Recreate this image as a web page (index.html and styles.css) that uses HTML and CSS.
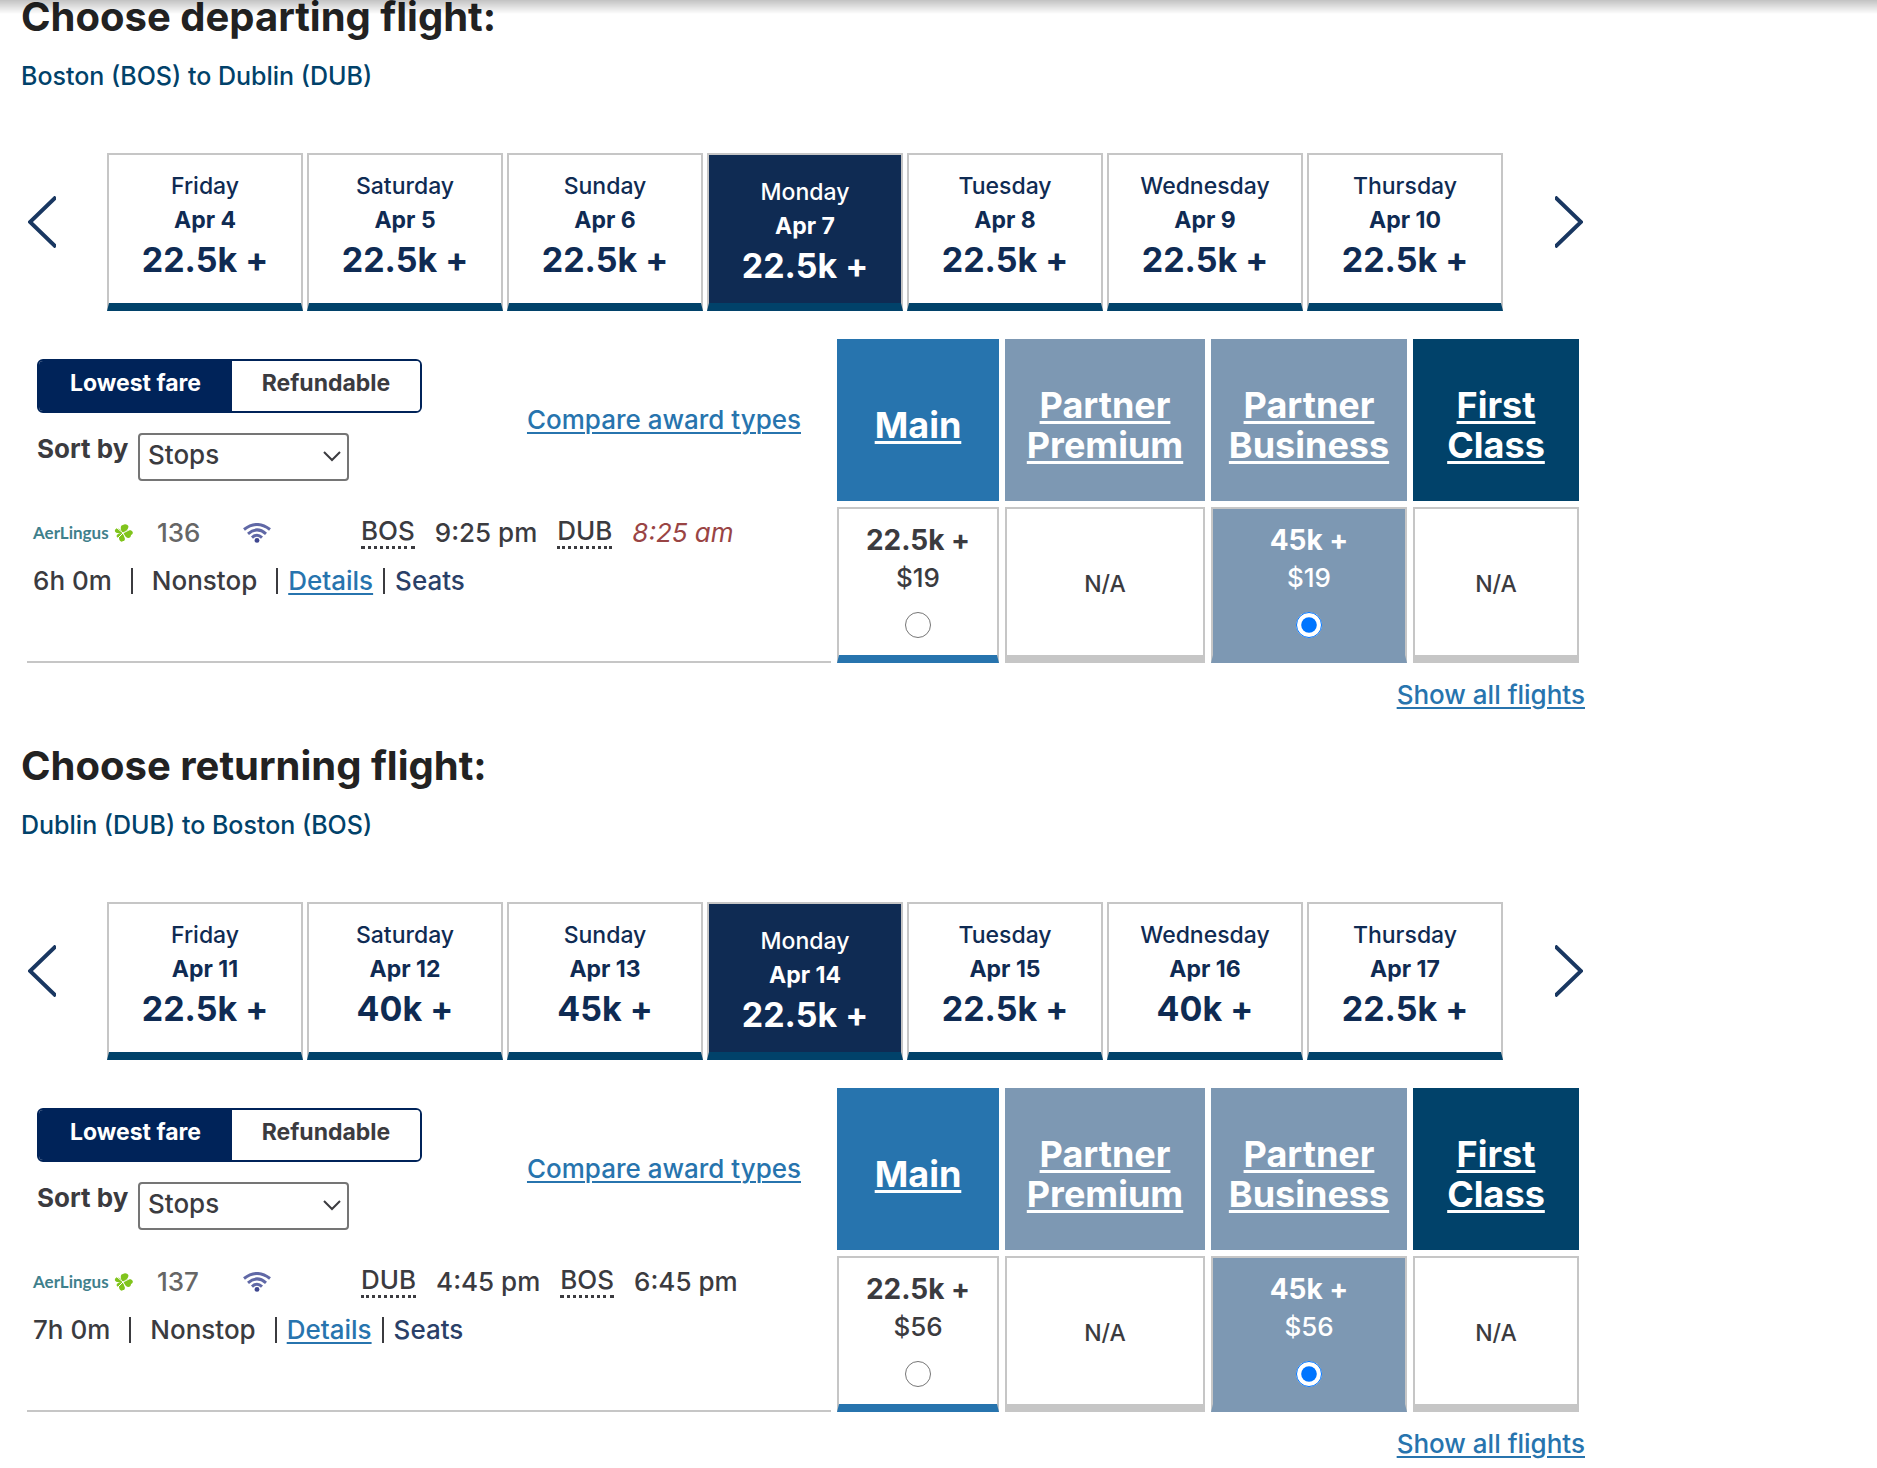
FILE: index.html
```html
<!DOCTYPE html>
<html lang="en">
<head>
<meta charset="utf-8">
<meta name="viewport" content="width=device-width, initial-scale=1">
<title>Choose flights</title>
<link rel="stylesheet" href="styles.css">
</head>
<body>
<svg class="sprite" aria-hidden="true">
  <symbol id="chevron-left" viewBox="0 0 28 52"><path d="M28 1 L2 26 L28 51" fill="none" stroke="#193761" stroke-width="4"/></symbol>
  <symbol id="chevron-right" viewBox="0 0 28 52"><path d="M0 1 L26 26 L0 51" fill="none" stroke="#193761" stroke-width="4"/></symbol>
  <symbol id="chevron-down" viewBox="0 0 18 12"><path d="M1 1 L9 9 L17 1" fill="none" stroke="#3b3b3f" stroke-width="2"/></symbol>
  <symbol id="wifi" viewBox="0 0 28 20">
    <g fill="none" stroke="#6068a6" stroke-width="3">
      <path d="M1 6.500 Q14 -3.500 27 6.500"/><path d="M5 10.800 Q14 3 23 10.800"/><path d="M9 14.600 Q14 10 19 14.600"/>
    </g>
    <circle cx="14" cy="17.400" r="2.400" fill="#3f4790"/>
  </symbol>
  <symbol id="shamrock" viewBox="0 0 19 18">
    <g fill="#80c41c">
      <path d="M9 9 C5 10 0 9 1 6 C2 4 4 4 5 5 C6 5 8 7 9 9Z"/>
      <path d="M9 9 C6 6 6 1 9 1 C11 -1 16 1 14 4 C14 6 11 7 9 9Z"/>
      <path d="M9 9 C11 6 16 5 18 7 C20 9 18 11 17 11 C17 14 14 15 12 13 C10 12 10 10 9 9Z"/>
      <path d="M9 9 C11 13 12 17 9 17 C7 19 5 16 5 14 C2 14 2 11 4 10 C6 9 7 9 9 9Z"/>
    </g>
    <path d="M9 9 L3 4 M9 9 L17 5 M9 9 L13 17 M9 9 L3 15" stroke="#fff" stroke-width="1" fill="none"/>
  </symbol>
</svg>
<div class="top-shadow"></div>
<main class="page">

  <section class="leg">
    <h2 class="leg-title">Choose departing flight:</h2>
    <p class="route">Boston (BOS) to Dublin (DUB)</p>
    <div class="calendar">
      <button class="arrow" type="button" aria-label="Previous dates"><svg><use href="#chevron-left"/></svg></button>
      <div class="days">
        <button class="day" type="button"><span>Friday</span><b>Apr 4</b><strong>22.5k +</strong></button>
        <button class="day" type="button"><span>Saturday</span><b>Apr 5</b><strong>22.5k +</strong></button>
        <button class="day" type="button"><span>Sunday</span><b>Apr 6</b><strong>22.5k +</strong></button>
        <button class="day selected" type="button" aria-pressed="true"><span>Monday</span><b>Apr 7</b><strong>22.5k +</strong></button>
        <button class="day" type="button"><span>Tuesday</span><b>Apr 8</b><strong>22.5k +</strong></button>
        <button class="day" type="button"><span>Wednesday</span><b>Apr 9</b><strong>22.5k +</strong></button>
        <button class="day" type="button"><span>Thursday</span><b>Apr 10</b><strong>22.5k +</strong></button>
      </div>
      <button class="arrow" type="button" aria-label="Next dates"><svg><use href="#chevron-right"/></svg></button>
    </div>
    <table class="fares">
      <colgroup><col><col class="col-main"><col class="col-premium"><col class="col-business"><col class="col-first"></colgroup>
      <thead>
        <tr>
          <td class="tools-cell">
            <div class="tools">
              <div class="filters">
                <div class="toggle">
                  <button class="toggle-option active" type="button">Lowest fare</button>
                  <button class="toggle-option" type="button">Refundable</button>
                </div>
                <div class="sort">
                  <label for="sort-out">Sort by</label>
                  <span class="select-box">
                    <select id="sort-out"><option>Stops</option><option>Price</option></select>
                    <svg><use href="#chevron-down"/></svg>
                  </span>
                </div>
              </div>
              <a class="link" href="#compare">Compare award types</a>
            </div>
          </td>
          <th class="main" scope="col"><a href="#main">Main</a></th>
          <th class="partner" scope="col"><a href="#premium">Partner Premium</a></th>
          <th class="partner" scope="col"><a href="#business">Partner Business</a></th>
          <th class="first" scope="col"><a href="#first">First<br>Class</a></th>
        </tr>
      </thead>
      <tbody>
        <tr>
          <td class="flight">
            <div class="flight-line">
              <span class="airline">AerLingus<svg><use href="#shamrock"/></svg></span>
              <span class="number">136</span>
              <svg class="wifi"><use href="#wifi"/></svg>
              <span class="times"><abbr title="Boston">BOS</abbr><span>9:25 pm</span><abbr title="Dublin">DUB</abbr><em>8:25 am</em></span>
            </div>
            <div class="flight-line info"><span>6h 0m</span><i></i><span>Nonstop</span><i class="tight"></i><a class="link" href="#details">Details</a><i class="tight"></i><a class="seats" href="#seats">Seats</a></div>
          </td>
          <td class="fare fare-main"><label><b>22.5k +</b><span>$19</span><input type="radio" name="out"></label></td>
          <td class="fare none">N/A</td>
          <td class="fare chosen"><label><b>45k +</b><span>$19</span><input type="radio" name="out" checked></label></td>
          <td class="fare none">N/A</td>
        </tr>
      </tbody>
    </table>
    <p class="show-all"><a class="link" href="#all">Show all flights</a></p>
  </section>

  <section class="leg">
    <h2 class="leg-title">Choose returning flight:</h2>
    <p class="route">Dublin (DUB) to Boston (BOS)</p>
    <div class="calendar">
      <button class="arrow" type="button" aria-label="Previous dates"><svg><use href="#chevron-left"/></svg></button>
      <div class="days">
        <button class="day" type="button"><span>Friday</span><b>Apr 11</b><strong>22.5k +</strong></button>
        <button class="day" type="button"><span>Saturday</span><b>Apr 12</b><strong>40k +</strong></button>
        <button class="day" type="button"><span>Sunday</span><b>Apr 13</b><strong>45k +</strong></button>
        <button class="day selected" type="button" aria-pressed="true"><span>Monday</span><b>Apr 14</b><strong>22.5k +</strong></button>
        <button class="day" type="button"><span>Tuesday</span><b>Apr 15</b><strong>22.5k +</strong></button>
        <button class="day" type="button"><span>Wednesday</span><b>Apr 16</b><strong>40k +</strong></button>
        <button class="day" type="button"><span>Thursday</span><b>Apr 17</b><strong>22.5k +</strong></button>
      </div>
      <button class="arrow" type="button" aria-label="Next dates"><svg><use href="#chevron-right"/></svg></button>
    </div>
    <table class="fares">
      <colgroup><col><col class="col-main"><col class="col-premium"><col class="col-business"><col class="col-first"></colgroup>
      <thead>
        <tr>
          <td class="tools-cell">
            <div class="tools">
              <div class="filters">
                <div class="toggle">
                  <button class="toggle-option active" type="button">Lowest fare</button>
                  <button class="toggle-option" type="button">Refundable</button>
                </div>
                <div class="sort">
                  <label for="sort-back">Sort by</label>
                  <span class="select-box">
                    <select id="sort-back"><option>Stops</option><option>Price</option></select>
                    <svg><use href="#chevron-down"/></svg>
                  </span>
                </div>
              </div>
              <a class="link" href="#compare">Compare award types</a>
            </div>
          </td>
          <th class="main" scope="col"><a href="#main">Main</a></th>
          <th class="partner" scope="col"><a href="#premium">Partner Premium</a></th>
          <th class="partner" scope="col"><a href="#business">Partner Business</a></th>
          <th class="first" scope="col"><a href="#first">First<br>Class</a></th>
        </tr>
      </thead>
      <tbody>
        <tr>
          <td class="flight">
            <div class="flight-line">
              <span class="airline">AerLingus<svg><use href="#shamrock"/></svg></span>
              <span class="number">137</span>
              <svg class="wifi"><use href="#wifi"/></svg>
              <span class="times"><abbr title="Dublin">DUB</abbr><span>4:45 pm</span><abbr title="Boston">BOS</abbr><span>6:45 pm</span></span>
            </div>
            <div class="flight-line info"><span>7h 0m</span><i></i><span>Nonstop</span><i class="tight"></i><a class="link" href="#details">Details</a><i class="tight"></i><a class="seats" href="#seats">Seats</a></div>
          </td>
          <td class="fare fare-main"><label><b>22.5k +</b><span>$56</span><input type="radio" name="back"></label></td>
          <td class="fare none">N/A</td>
          <td class="fare chosen"><label><b>45k +</b><span>$56</span><input type="radio" name="back" checked></label></td>
          <td class="fare none">N/A</td>
        </tr>
      </tbody>
    </table>
    <p class="show-all"><a class="link" href="#all">Show all flights</a></p>
  </section>

</main>
</body>
</html>
```
FILE: styles.css
```css
* { box-sizing: border-box; }

body {
  margin: 0;
  background: #fff;
  color: #3b3b3f;
  font-family: Inter, "Liberation Sans", sans-serif;
  font-size: 26px;
  font-weight: 450;
  line-height: 32px;
}

button, select { font: inherit; color: inherit; margin: 0; }
.sprite { position: absolute; width: 0; height: 0; }

.top-shadow {
  position: fixed;
  top: 0;
  left: 0;
  right: 0;
  height: 14px;
  background: linear-gradient(rgba(0, 0, 0, .24), rgba(0, 0, 0, 0));
}

.page { max-width: 1585px; padding-left: 21px; }
.leg { padding-bottom: 38px; }
.leg:last-child { padding-bottom: 0; }

.leg-title {
  margin: 0;
  color: #222;
  font-size: 40px;
  font-weight: 700;
  line-height: 34px;
}

.route { margin: 26px 0 0; color: #01426a; font-size: 25px; }

/* Date strip */
.calendar {
  display: grid;
  grid-template-columns: 28px 1fr 28px;
  column-gap: 51px;
  align-items: center;
  margin-top: 61px;
  padding: 0 2px 0 7px;
}
.arrow {
  display: flex;
  height: 52px;
  margin-top: -20px;
  padding: 0;
  border: 0;
  background: none;
}
.arrow svg { width: 28px; height: 52px; }
.days { display: grid; grid-template-columns: repeat(7, 1fr); gap: 4px; padding-right: 1px; }
.day {
  display: flex;
  flex-direction: column;
  align-items: center;
  height: 158px;
  padding: 14px 0 0;
  border: 2px solid #c6c6c6;
  border-bottom: 8px solid #01426a;
  background: #fff;
  color: #0f2b53;
  font-size: 23px;
  line-height: 34px;
}
.day b { font-weight: 650; }
.day strong { font-size: 34px; font-weight: 700; line-height: 46px; }
.day.selected { padding-top: 20px; background: #0f2b53; color: #fff; }

/* Fare table */
.fares {
  width: 100%;
  margin-top: 22px;
  border-collapse: separate;
  border-spacing: 6px;
  table-layout: fixed;
}
.col-main { width: 162px; }
.col-premium { width: 200px; }
.col-business { width: 196px; }
.col-first { width: 166px; }
.fares td { padding: 0; }
.fares th {
  height: 162px;
  padding: 16px 6px 6px;
  color: #fff;
  font-size: 36px;
  font-weight: 700;
  line-height: 40px;
}
.fares th a {
  color: inherit;
  text-decoration-thickness: 3px;
  text-underline-offset: 3px;
  text-decoration-skip-ink: none;
}
.main { background: #2774ae; }
.partner { background: #7d98b3; }
.first { background: #01426a; }

.tools {
  display: flex;
  align-items: center;
  justify-content: space-between;
  padding: 0 30px 0 10px;
}
.toggle {
  display: flex;
  width: 385px;
  height: 54px;
  border: 2px solid #002359;
  border-radius: 6px;
  overflow: hidden;
}
.toggle-option {
  flex: 1;
  padding: 0 0 6px;
  border: 0;
  background: #fff;
  font-size: 23px;
  font-weight: 700;
}
.toggle-option.active { flex: 0 0 193px; background: #002359; color: #fff; }

.sort { display: flex; gap: 7px; margin-top: 20px; }
.sort label { width: 94px; font-size: 26px; font-weight: 700; white-space: nowrap; }
.select-box { position: relative; display: flex; }
.select-box select {
  width: 211px;
  height: 48px;
  padding: 0 8px 4px;
  appearance: none;
  border: 2px solid #757575;
  border-radius: 4px;
  background: #fff;
}
.select-box svg {
  position: absolute;
  top: 18px;
  right: 8px;
  width: 18px;
  height: 12px;
  pointer-events: none;
}

.link { color: #2774ae; text-decoration-thickness: 2px; text-underline-offset: 3px; }

/* Flight description */
.flight { vertical-align: top; border-bottom: 2px solid #c6c6c6; }
.flight-line {
  display: flex;
  align-items: center;
  height: 48px;
  padding-left: 6px;
  white-space: nowrap;
}
.flight-line:first-child { margin-top: 2px; }
.airline {
  display: flex;
  align-items: center;
  justify-content: space-between;
  width: 100px;
  color: #3f808c;
  font-family: Lato, sans-serif;
  font-size: 17px;
  font-weight: 700;
}
.airline svg { width: 19px; height: 18px; }
.number { width: 86px; padding-left: 24px; color: #666; }
.wifi { width: 28px; height: 20px; margin-left: 24px; }
.times { display: flex; gap: 20px; margin-left: 90px; }
.times abbr { text-decoration: none; line-height: 28px; border-bottom: 3px dotted #3b3b3f; }
.times em { color: #994444; }
.info i { width: 2px; height: 26px; margin: 0 19px; background: #3b3b3f; }
.info .tight { margin: 0 10px; }
.info span + .tight { margin-left: 19px; }
.seats { color: #2a4068; text-decoration: none; }

/* Fare cells */
.fare {
  height: 156px;
  border: 2px solid #c6c6c6;
  border-bottom-width: 8px;
  text-align: center;
  vertical-align: top;
}
.fare label {
  display: flex;
  flex-direction: column;
  align-items: center;
  padding-top: 12px;
  line-height: 38px;
}
.fare b { font-size: 28px; font-weight: 700; }
.fare input { width: 26px; height: 26px; margin: 15px 0 0; }
.fare-main { border-bottom-color: #2774ae; }
.fares .none { padding-top: 4px; vertical-align: middle; font-size: 23px; }
.fare.chosen { border-bottom-color: #7d98b3; background: #7d98b3; color: #fff; }

.show-all { margin: 10px 0 0; text-align: right; }
```
